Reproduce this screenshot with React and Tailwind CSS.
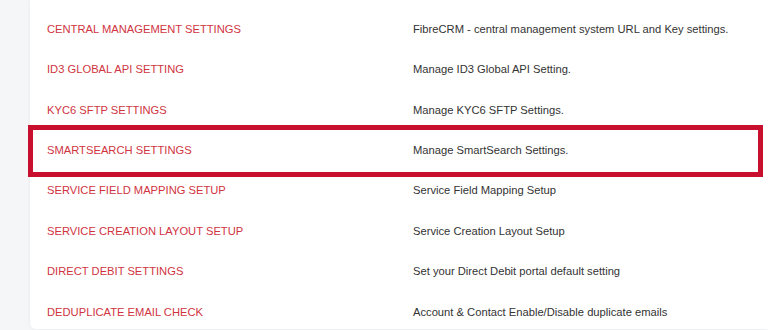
const rows = [
  ["CENTRAL MANAGEMENT SETTINGS", "FibreCRM - central management system URL and Key settings."],
  ["ID3 GLOBAL API SETTING", "Manage ID3 Global API Setting."],
  ["KYC6 SFTP SETTINGS", "Manage KYC6 SFTP Settings."],
  ["SMARTSEARCH SETTINGS", "Manage SmartSearch Settings."],
  ["SERVICE FIELD MAPPING SETUP", "Service Field Mapping Setup"],
  ["SERVICE CREATION LAYOUT SETUP", "Service Creation Layout Setup"],
  ["DIRECT DEBIT SETTINGS", "Set your Direct Debit portal default setting"],
  ["DEDUPLICATE EMAIL CHECK", "Account & Contact Enable/Disable duplicate emails"],
];

const App = () => {
  return (
    <div className="h-[330px] w-[768px] overflow-hidden bg-[#f5f6f8] pl-[30px] [font-family:'Liberation_Sans',Arial,sans-serif]">
      <div className="relative h-[329px] rounded-bl-md bg-white pt-[9px] shadow-[0_0_4px_rgba(0,0,0,0.06)]">
        {rows.map(([name, desc]) => (
          <div key={name} className="flex h-[40.4px] items-center text-[11.2px]">
            <a href="#" className="w-[383px] shrink-0 pl-[17px] text-[#d0343f]">{name}</a>
            <span className="text-[#333333]">{desc}</span>
          </div>
        ))}
        <div className="absolute left-[-2px] top-[125px] h-[52px] w-[735px] border-[5px] border-[#c8102e]"></div>
      </div>
    </div>
  );
};

export default App;
